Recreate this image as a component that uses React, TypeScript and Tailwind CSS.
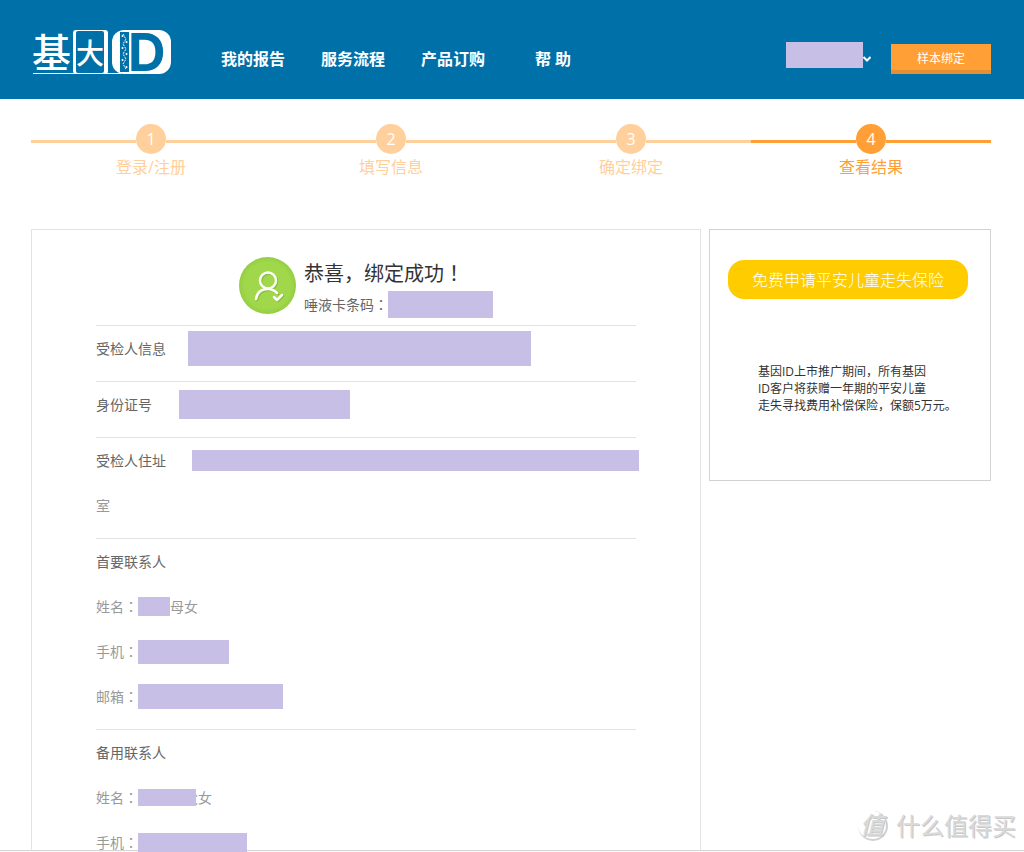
import React from "react";
import clsx from "clsx";

interface StepProps {
    index: number;
    label: string;
    active?: boolean;
}

interface FieldProps {
    label: string;
    children?: React.ReactNode;
}

const navItems = ["我的报告", "服务流程", "产品订购", "帮 助"];
const steps = ["登录/注册", "填写信息", "确定绑定", "查看结果"];

const Mask = ({className}: {className: string}) => (
    <span className={clsx("relative z-10 block shrink-0 bg-[#c7bfe6]", className)}></span>
)

// the TC face centres full-width punctuation in its cell
const Mark = ({children}: {children: string}) => (
    <span className="font-['Noto_Sans_CJK_TC',sans-serif]">{children}</span>
)

const Logo = () => (
    <svg width="142" height="48" viewBox="0 0 142 48" role="img" aria-label="基因ID" className="overflow-visible">
        <text x="1" y="39" fontSize="39" fontWeight="500" fill="#fff" fontFamily="'Noto Sans CJK SC', sans-serif">基</text>
        <path d="M2 45.500H90" stroke="#fff" strokeWidth="1" />
        <rect x="42" y="2" width="35" height="44" rx="3" fill="#fff" />
        <rect x="45" y="3" width="28" height="42" rx="2" fill="#0070a9" />
        <text x="45" y="36" fontSize="28" fontWeight="500" fill="#fff" fontFamily="'Noto Sans CJK SC', sans-serif">大</text>
        <rect x="81" y="2" width="59" height="44" rx="12" fill="#fff" />
        <rect x="89" y="4" width="9" height="40" fill="#0070a9" />
        <path
            d="M92 6l3 5-3 5 3 5-3 5 3 5-3 5 3 5"
            fill="none"
            stroke="#fff"
            strokeWidth="1"
            strokeDasharray="2 1"
        />
        <g fill="#fff">
            <circle cx="91.500" cy="8" r="1" />
            <circle cx="95.500" cy="14" r="1" />
            <circle cx="91.500" cy="20" r="1" />
            <circle cx="95.500" cy="26" r="1" />
            <circle cx="91.500" cy="32" r="1" />
            <circle cx="95.500" cy="39" r="1" />
        </g>
        <text x="97" y="43" fontSize="52" fontWeight="700" fill="#0070a9" fontFamily="Inter, sans-serif">D</text>
    </svg>
)

const SuccessIcon = () => (
    <svg width="57" height="57" viewBox="0 0 57 57" aria-hidden="true">
        <defs>
            <radialGradient id="badge">
                <stop offset="0.8" stopColor="#a1d84b" />
                <stop offset="1" stopColor="#93ce42" />
            </radialGradient>
        </defs>
        <circle cx="28.5" cy="28.5" r="28.5" fill="url(#badge)" />
        <g fill="none" strokeWidth="2.5" strokeLinecap="round" strokeLinejoin="round">
            <g stroke="#84bd38" transform="translate(1 1)">
                <circle cx="29" cy="23.500" r="8" />
                <path d="M17 42c1-6 5-10 12-10 4 0 7 2 9 4M35 40l3 3 5-5" />
            </g>
            <g stroke="#fff">
                <circle cx="29" cy="23.500" r="8" />
                <path d="M17 42c1-6 5-10 12-10 4 0 7 2 9 4M35 40l3 3 5-5" />
            </g>
        </g>
    </svg>
)

const Header = () => (
    <header className="flex h-[99px] items-start bg-[#0070a9] pl-[31px] pr-[33px]">
        <a href="#" className="mt-7 block w-[172px] shrink-0"><Logo /></a>
        <nav className="mt-[47px] flex">
            {navItems.map((item) => (
                <a key={item} href="#" className="w-[100px] text-center text-base leading-6 font-bold text-white">{item}</a>
            ))}
        </nav>
        <div className="ml-auto flex">
            <button type="button" aria-label="账户" className="mt-[42px] mr-5 flex h-[26px] items-center">
                <Mask className="h-[26px] w-[77px]" />
                <svg width="8" height="6" viewBox="0 0 8 6" className="mt-2">
                    <path d="M0.500 1L4 4.500 7.500 1" fill="none" stroke="#fff" strokeWidth="2" />
                </svg>
            </button>
            <button type="button" className="mt-11 h-[30px] w-[100px] border-b-4 border-[#e38f34] bg-[#ff9f35] pt-1 text-xs text-white">
                样本绑定
            </button>
        </div>
    </header>
)

const Step = ({index, label, active}: StepProps) => (
    <li className={clsx("flex-1", active ? "text-[#ff9f35]" : "text-[#ffd09c]")}>
        <div className="flex items-start">
            <span className="mt-4 h-[3px] flex-1 bg-current"></span>
            <span className="size-[30px] rounded-full bg-current text-center">
                <span className="text-base leading-[30px] text-white">{index}</span>
            </span>
            <span className="mt-4 h-[3px] flex-1 bg-current"></span>
        </div>
        <p className="mt-px text-center text-base leading-6">{label}</p>
    </li>
)

const Field = ({label, children}: FieldProps) => (
    <div className="flex h-[45px] items-center text-[#999]">
        <span>{label}<Mark>：</Mark></span>
        {children}
    </div>
)

const App = () => {
    return(
        <div className="relative bg-white font-['Open_Sans','Noto_Sans_CJK_SC',sans-serif] text-sm text-[#666]">
            <Header />
            <main className="pl-[31px] pr-[33px]">
                <ol className="flex pt-[25px]">
                    {steps.map((label, i) => (
                        <Step key={label} index={i + 1} label={label} active={i === 3} />
                    ))}
                </ol>
                <div className="mt-[50px] flex items-start gap-2">
                    <section className="flex-1 border border-b-0 border-[#e3e3e3] px-16">
                        <div className="flex h-[95px] gap-2 pt-[27px] pl-[143px]">
                            <SuccessIcon />
                            <div>
                                <h1 className="mt-1 text-xl leading-6 text-[#333]">恭喜，绑定成功<Mark>！</Mark></h1>
                                <div className="mt-1 flex h-7 items-center">
                                    <span>唾液卡条码<Mark>：</Mark></span>
                                    <Mask className="h-[27px] w-[105px]" />
                                </div>
                            </div>
                        </div>
                        <div className="border-t border-[#e3e3e3] pb-[10px]">
                            <div className="flex h-[45px] items-center">
                                <span className="mr-[22px]">受检人信息</span>
                                <Mask className="h-[35px] w-[343px]" />
                            </div>
                        </div>
                        <div className="border-t border-[#e3e3e3] pb-[10px]">
                            <div className="flex h-[45px] items-center">
                                <span className="mr-[27px]">身份证号</span>
                                <Mask className="h-[29px] w-[171px]" />
                            </div>
                        </div>
                        <div className="border-t border-[#e3e3e3] pb-[10px]">
                            <div className="flex h-[45px] items-center">
                                <span className="mr-[26px] shrink-0">受检人住址</span>
                                <Mask className="h-[21px] w-[447px]" />
                            </div>
                            <p className="leading-[45px] text-[#999]">室</p>
                        </div>
                        <div className="border-t border-[#e3e3e3] pb-[10px]">
                            <h2 className="leading-[45px]">首要联系人</h2>
                            <Field label="姓名">
                                <Mask className="h-[19px] w-8" />
                                <span>母女</span>
                            </Field>
                            <Field label="手机">
                                <Mask className="h-6 w-[91px]" />
                            </Field>
                            <Field label="邮箱">
                                <Mask className="h-[25px] w-[145px]" />
                            </Field>
                        </div>
                        <div className="h-[121px] border-t border-[#e3e3e3]">
                            <h2 className="leading-[45px]">备用联系人</h2>
                            <Field label="姓名">
                                <Mask className="h-[17px] w-[58px]" />
                                <span className="-ml-3">父女</span>
                            </Field>
                            <Field label="手机">
                                <Mask className="h-[19px] w-[109px]" />
                            </Field>
                        </div>
                    </section>
                    <aside className="h-[252px] w-[282px] border border-[#d2d2d2] pt-[30px] pl-[18px]">
                        <button type="button" className="h-[39px] w-60 rounded-2xl bg-[#fc0] text-base font-light text-white">
                            免费申请平安儿童走失保险
                        </button>
                        <p className="mt-16 pl-[30px] text-xs leading-[17px] text-[#333]">
                            基因ID上市推广期间，所有基因<br />
                            ID客户将获赠一年期的平安儿童<br />
                            走失寻找费用补偿保险，保额5万元。
                        </p>
                    </aside>
                </div>
            </main>
            <footer className="h-[2px] border-t border-[#d6d6d6] bg-[#f8f8f8]"></footer>
            <div className="absolute right-2 bottom-2 flex items-center gap-2 text-[#dadada] [text-shadow:1px_1px_0_#c8c8c8]">
                <span className="flex size-[30px] items-center justify-center rounded-full border-r-2 border-b-2 border-[#d0d0d0] text-2xl font-medium italic">值</span>
                <span className="text-2xl leading-9">什么值得买</span>
            </div>
        </div>
    )
}
export default App;
